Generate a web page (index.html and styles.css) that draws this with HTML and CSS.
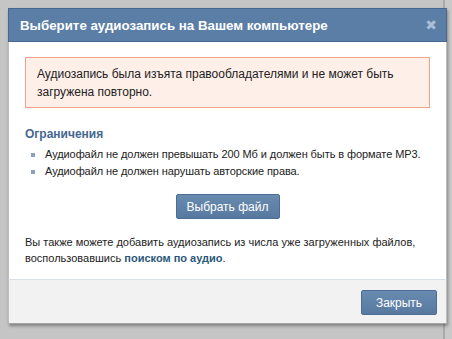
FILE: index.html
```html
<html>
<head>
	<meta http-equiv="Content-Type" content="text/html; charset=utf-8" />
	<link rel="stylesheet" href="styles.css">
</head>
<body class="page">

<div class="box">
	<div class="box_title">
		<span class="title_text">Выберите аудиозапись на Вашем компьютере</span>
		<span class="box_x">&#10006;</span>
	</div>
	<div class="box_body">
		<div class="error">Аудиозапись была изъята правообладателями и не может быть загружена повторно.</div>
		<div class="subhead">Ограничения</div>
		<ul class="limits">
			<li>Аудиофайл не должен превышать 200 Мб и должен быть в формате MP3.</li>
			<li>Аудиофайл не должен нарушать авторские права.</li>
		</ul>
		<div class="center"><button class="button">Выбрать файл</button></div>
		<div class="info">Вы также можете добавить аудиозапись из числа уже загруженных файлов,<br>воспользовавшись <a class="link" href="#">поиском по аудио</a>.</div>
	</div>
	<div class="box_controls">
		<button class="button close">Закрыть</button>
	</div>
</div>

</body>
</html>
```

FILE: styles.css
```css
html, body {margin:0; padding:0;}
.page {
	width:452px; height:339px; overflow:hidden;
	background: linear-gradient(to right, #c5c5c5 443px, #a9a9a9 443px, #a9a9a9 445px, #c9c9c9 445px);
	font-family: "Liberation Sans", "DejaVu Sans", sans-serif;
	font-size:11px; color:#000;
}
.box {
	margin:8px 0 0 8px; width:439px;
	background:#fff;
	box-shadow: 1px 2px 3px rgba(0,0,0,0.35);
}
.box_title {
	display:flex; align-items:center; justify-content:space-between;
	height:32px; padding:0 9px 0 11px;
	background:#5a7ea6; border:1px solid #45688e;
	color:#fff; font-size:13.3px; font-weight:bold;
}
.box_x {color:#a9bed6; font-size:14px;}
.box_body {
	padding:15px 16px 13px 16px;
	border-left:1px solid #bdbdbd; border-right:1px solid #bdbdbd;
}
.error {
	background:#ffefe9; border:1px solid #f2a28f;
	padding:7px 11px 6px 11px; line-height:18px; color:#222;
	font-size:12px;
}
.subhead {color:#45688e; font-weight:bold; margin:19px 0 5px 0; font-size:12px;}
.limits {list-style:none; margin:0; padding:0;}
.limits li {line-height:17px; padding-left:20px; position:relative; color:#222; white-space:nowrap; letter-spacing:-0.08px;}
.limits li:before {
	content:""; position:absolute; left:6px; top:7px;
	width:4px; height:4px; background:#8da2b8;
}
.center {text-align:center; margin:14px 0 15px 0;}
.button {
	font-family:inherit; font-size:12px; color:#fff;
	background:linear-gradient(#6a8bb0, #5779a0);
	border:1px solid #4d6d94; border-radius:2px;
	width:104px; height:25px; padding:0;
}
.info {line-height:16px; color:#222; white-space:nowrap;}
.link {color:#2b587a; font-weight:bold; text-decoration:none;}
.box_controls {
	display:flex; justify-content:flex-end;
	background:#f2f2f2; border-top:1px solid #dae1e8;
	border-left:1px solid #bdbdbd; border-right:1px solid #bdbdbd; border-bottom:1px solid #a5a5a5;
	padding:10px 9px 8px 0; height:25px;
}
.close {width:76px; height:25px;}
```
